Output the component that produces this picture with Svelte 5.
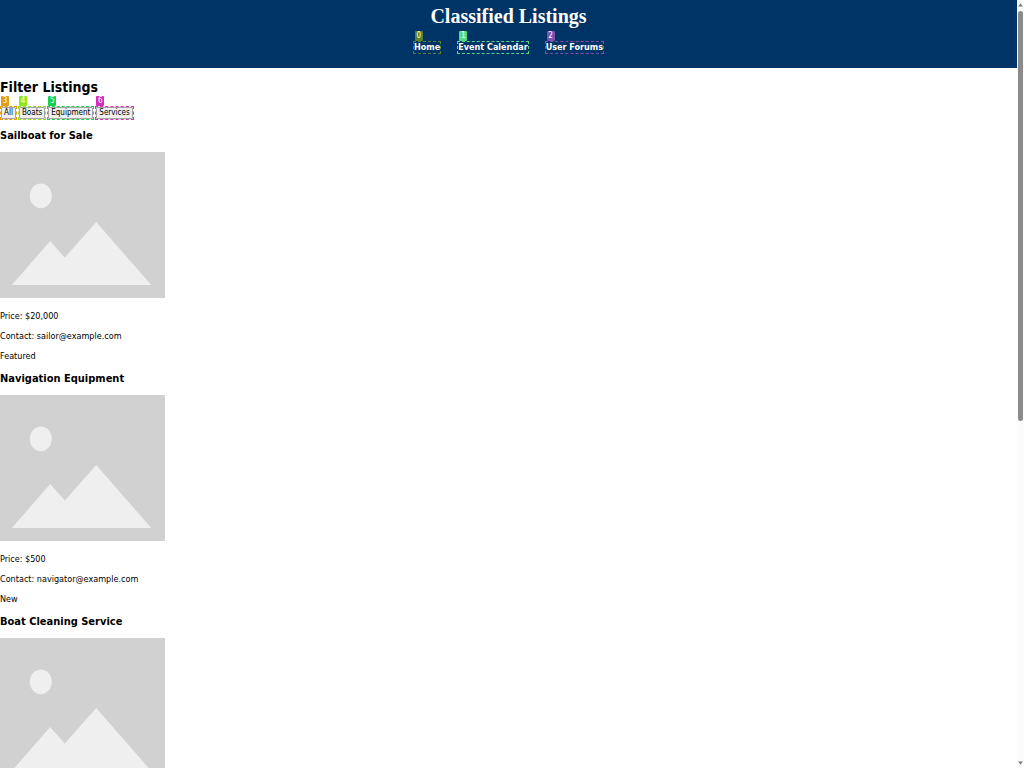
<script>
  const links = [
    { label: 'Home', mark: 0, tone: 'olive' },
    { label: 'Event Calendar', mark: 1, tone: 'mint' },
    { label: 'User Forums', mark: 2, tone: 'purple' }
  ];
  const filters = [
    { label: 'All', mark: 3, tone: 'orange' },
    { label: 'Boats', mark: 4, tone: 'lime' },
    { label: 'Equipment', mark: 5, tone: 'green' },
    { label: 'Services', mark: 6, tone: 'magenta' }
  ];
  const listings = [
    { title: 'Sailboat for Sale', lines: ['Price: $20,000', 'Contact: sailor@example.com', 'Featured'] },
    { title: 'Navigation Equipment', lines: ['Price: $500', 'Contact: navigator@example.com', 'New'] },
    { title: 'Boat Cleaning Service', lines: [] }
  ];
</script>

<div class="window">
  <div class="page">
    <header>
      <h1>Classified Listings</h1>
      <nav>
        {#each links as link}
          <a href="#top" class="marked {link.tone}">{link.label}<span class="badge">{link.mark}</span></a>
        {/each}
      </nav>
    </header>
    <main>
      <h2>Filter Listings</h2>
      <div class="filters">
        {#each filters as filter}
          <div class="marked {filter.tone}">
            <button type="button">{filter.label}</button><span class="badge">{filter.mark}</span>
          </div>
        {/each}
      </div>
      {#each listings as item}
        <article>
          <h3>{item.title}</h3>
          <svg class="photo" viewBox="0 0 165 146" role="img" aria-label={item.title}>
            <rect width="165" height="146" fill="#d1d1d1" />
            <ellipse cx="40.8" cy="43.8" rx="11" ry="12.4" fill="#efefef" />
            <path d="M11.8 133 L50.2 89 L64.8 105.6 L96.2 70 L151.3 133 Z" fill="#efefef" />
          </svg>
          {#each item.lines as line}
            <p>{line}</p>
          {/each}
        </article>
      {/each}
    </main>
  </div>
  <div class="scrollbar" aria-hidden="true">
    <svg viewBox="0 0 7 11"><path d="M1 6.5 L3.5 3.5 L6 6.5 Z" fill="#777" /></svg>
    <div class="track"><div class="thumb"></div></div>
    <svg viewBox="0 0 7 11"><path d="M1 4.5 L3.5 7.5 L6 4.5 Z" fill="#777" /></svg>
  </div>
</div>

<style>
  .window {
    display: grid;
    grid-template-columns: minmax(0, 1fr) 7px;
    height: 100vh;
    overflow: hidden;
    background: #fff;
    color: #000;
    font-family: "DejaVu Sans Condensed", "DejaVu Sans", sans-serif;
    font-size: 9px;
    line-height: 11px;
  }
  .page {
    overflow-y: auto;
    scrollbar-width: none;
  }
  h1, h2, h3, p {
    margin: 0;
  }
  header {
    display: flex;
    flex-direction: column;
    align-items: center;
    gap: 13px;
    padding: 4px 0 14px;
    background: #003366;
    color: #fff;
  }
  h1 {
    font: bold 20px/24px "Liberation Serif", serif;
  }
  nav {
    display: flex;
    gap: 16px;
  }
  .marked {
    position: relative;
    border: 1px dashed var(--tone);
  }
  nav a {
    color: #fff;
    font-weight: bold;
    text-decoration: none;
  }
  .badge {
    position: absolute;
    bottom: calc(100% + 1px);
    left: 1px;
    width: 8px;
    height: 10px;
    border-radius: 1px;
    background: var(--tone);
    color: #fff;
    font-size: 8px;
    font-weight: normal;
    line-height: 10px;
    text-align: center;
  }
  .filters .badge {
    left: 0;
  }
  .olive { --tone: #59802a; }
  .mint { --tone: #51dc8a; }
  .purple { --tone: #7d50b0; }
  .orange { --tone: #e39c12; }
  .lime { --tone: #91e51b; }
  .green { --tone: #16d149; }
  .magenta { --tone: #d52cbb; }
  main {
    padding-top: 11px;
  }
  h2 {
    font-size: 14px;
    line-height: 16px;
  }
  .filters {
    display: flex;
    gap: 1px;
    margin: 11px 0 9px;
  }
  button {
    display: block;
    padding: 0 2px;
    border: 1px solid #a5a5a5;
    border-radius: 1px;
    background: #efefef;
    color: #000;
    font: inherit;
    font-size: 8px;
    line-height: 10px;
  }
  article {
    margin-bottom: 10px;
  }
  h3 {
    font-size: 11px;
    line-height: 14px;
  }
  .photo {
    display: block;
    width: 165px;
    height: 146px;
    margin: 9px 0 13px;
  }
  p + p {
    margin-top: 9px;
  }
  .scrollbar {
    display: flex;
    flex-direction: column;
    background: #fcfcfc;
  }
  .scrollbar svg {
    display: block;
    height: 11px;
  }
  .track {
    flex: 1;
    padding: 0 1px;
  }
  .thumb {
    height: 55%;
    border-radius: 3px;
    background: #8b8b8b;
  }
</style>
